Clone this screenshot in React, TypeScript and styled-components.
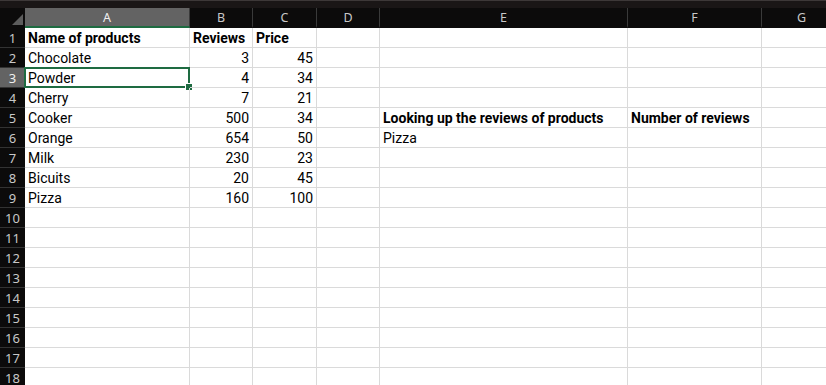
import styled, { createGlobalStyle } from "styled-components";

const GlobalStyle = createGlobalStyle`
  html, body {
    margin: 0;
    padding: 0;
    background: #ffffff;
    overflow: hidden;
  }
  body {
    font-family: Roboto, "Liberation Sans", sans-serif;
  }
`;

const columns = [
  { key: "A", width: 165 },
  { key: "B", width: 63 },
  { key: "C", width: 64 },
  { key: "D", width: 63 },
  { key: "E", width: 248 },
  { key: "F", width: 134 },
  { key: "G", width: 80 },
];

type CellData = { text: string; bold?: boolean; num?: boolean };

const data: Record<number, Record<string, CellData>> = {
  1: {
    A: { text: "Name of products", bold: true },
    B: { text: "Reviews", bold: true },
    C: { text: "Price", bold: true },
  },
  2: { A: { text: "Chocolate" }, B: { text: "3", num: true }, C: { text: "45", num: true } },
  3: { A: { text: "Powder" }, B: { text: "4", num: true }, C: { text: "34", num: true } },
  4: { A: { text: "Cherry" }, B: { text: "7", num: true }, C: { text: "21", num: true } },
  5: {
    A: { text: "Cooker" },
    B: { text: "500", num: true },
    C: { text: "34", num: true },
    E: { text: "Looking up the reviews of products", bold: true },
    F: { text: "Number of reviews", bold: true },
  },
  6: {
    A: { text: "Orange" },
    B: { text: "654", num: true },
    C: { text: "50", num: true },
    E: { text: "Pizza" },
  },
  7: { A: { text: "Milk" }, B: { text: "230", num: true }, C: { text: "23", num: true } },
  8: { A: { text: "Bicuits" }, B: { text: "20", num: true }, C: { text: "45", num: true } },
  9: { A: { text: "Pizza" }, B: { text: "160", num: true }, C: { text: "100", num: true } },
};

const rowNumbers = Array.from({ length: 18 }, (_, i) => i + 1);
const activeRow = 3;
const activeCol = "A";

export default function App() {
  return (
    <Sheet>
      <GlobalStyle />
      <TopStrip />
      <HeaderRow>
        <Corner>
          <CornerTriangle />
        </Corner>
        {columns.map((col) => (
          <ColHeader
            key={col.key}
            $width={col.width}
            $active={col.key === activeCol}
          >
            {col.key}
          </ColHeader>
        ))}
      </HeaderRow>

      {rowNumbers.map((row) => (
        <Row key={row}>
          <RowHeader $active={row === activeRow}>{row}</RowHeader>
          {columns.map((col) => {
            const cell = data[row]?.[col.key];
            const selected = row === activeRow && col.key === activeCol;
            return (
              <Cell
                key={col.key}
                $width={col.width}
                $bold={cell?.bold}
                $num={cell?.num}
              >
                {cell?.text}
                {selected && (
                  <Selection>
                    <FillHandle />
                  </Selection>
                )}
              </Cell>
            );
          })}
        </Row>
      ))}
    </Sheet>
  );
}

const Sheet = styled.div`
  width: 826px;
  height: 385px;
  overflow: hidden;
  display: flex;
  flex-direction: column;
  background: #ffffff;
`;

const TopStrip = styled.div`
  height: 8px;
  flex-shrink: 0;
  background: #1a1616;
  border-top: 1px solid #3d3838;
  box-sizing: border-box;
`;

const HeaderRow = styled.div`
  display: flex;
  height: 20px;
  flex-shrink: 0;
  background: #0c0b0b;
`;

const Corner = styled.div`
  width: 25px;
  flex-shrink: 0;
  position: relative;
`;

const CornerTriangle = styled.div`
  position: absolute;
  right: 2px;
  bottom: 3px;
  width: 0;
  height: 0;
  border-left: 11px solid transparent;
  border-bottom: 11px solid #5d5d5d;
`;

const ColHeader = styled.div<{ $width: number; $active?: boolean }>`
  width: ${(p) => p.$width}px;
  flex-shrink: 0;
  box-sizing: border-box;
  display: flex;
  align-items: center;
  justify-content: center;
  font-family: "Noto Sans", sans-serif;
  font-size: 12.5px;
  color: ${(p) => (p.$active ? "#f0f0f0" : "#c8c8c8")};
  background: ${(p) => (p.$active ? "#636363" : "#0c0b0b")};
  border-right: 1px solid #3a3a3a;
  border-bottom: 2px solid ${(p) => (p.$active ? "#1e6b41" : "#0c0b0b")};
  padding-top: 1px;
`;

const Row = styled.div`
  display: flex;
  height: 20px;
  flex-shrink: 0;
`;

const RowHeader = styled.div<{ $active?: boolean }>`
  width: 25px;
  flex-shrink: 0;
  box-sizing: border-box;
  display: flex;
  align-items: center;
  justify-content: center;
  font-family: "Noto Sans", sans-serif;
  font-size: 13px;
  color: ${(p) => (p.$active ? "#f0f0f0" : "#c8c8c8")};
  background: ${(p) => (p.$active ? "#636363" : "#0c0b0b")};
  border-bottom: 1px solid #333333;
`;

const Cell = styled.div<{ $width: number; $bold?: boolean; $num?: boolean }>`
  position: relative;
  width: ${(p) => p.$width}px;
  flex-shrink: 0;
  box-sizing: border-box;
  border-right: 1px solid #dadada;
  border-bottom: 1px solid #dadada;
  display: flex;
  align-items: center;
  justify-content: ${(p) => (p.$num ? "flex-end" : "flex-start")};
  padding: 1px 3px 0;
  font-family: Roboto, "Liberation Sans", sans-serif;
  font-size: 14px;
  font-weight: ${(p) => (p.$bold ? 700 : 400)};
  color: #000000;
  white-space: nowrap;
`;

const Selection = styled.div`
  position: absolute;
  left: -1px;
  top: -1px;
  right: -1px;
  bottom: -1px;
  border: 2px solid #1e6b41;
  pointer-events: none;
`;

const FillHandle = styled.div`
  position: absolute;
  right: -5px;
  bottom: -5px;
  width: 6px;
  height: 6px;
  background: #1e6b41;
  border: 1px solid #ffffff;
`;
